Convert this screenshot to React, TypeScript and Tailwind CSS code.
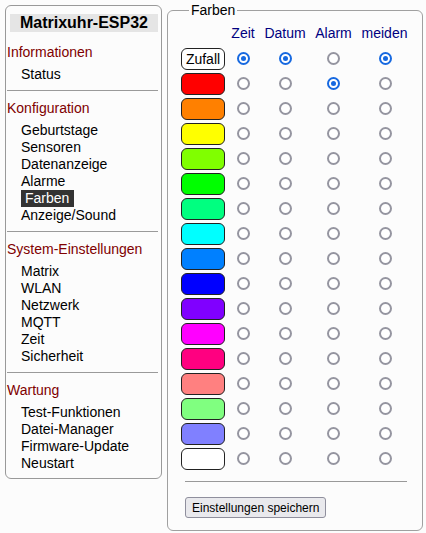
import React from "react";

const sections = [
  { title: "Informationen", items: ["Status"] },
  {
    title: "Konfiguration",
    items: ["Geburtstage", "Sensoren", "Datenanzeige", "Alarme", "Farben", "Anzeige/Sound"],
  },
  {
    title: "System-Einstellungen",
    items: ["Matrix", "WLAN", "Netzwerk", "MQTT", "Zeit", "Sicherheit"],
  },
  {
    title: "Wartung",
    items: ["Test-Funktionen", "Datei-Manager", "Firmware-Update", "Neustart"],
  },
];

const colors = [
  "#ff0000",
  "#ff8000",
  "#ffff00",
  "#80ff00",
  "#00ff00",
  "#00ff80",
  "#00ffff",
  "#0080ff",
  "#0000ff",
  "#8000ff",
  "#ff00ff",
  "#ff0080",
  "#ff8080",
  "#80ff80",
  "#8080ff",
  "#ffffff",
];

const columns = ["Zeit", "Datum", "Alarm", "meiden"];

// index of selected row per column (0 = Zufall)
const selected = [0, 0, 1, 0];

function Sidebar() {
  return (
    <nav className="mt-[5px] w-[157px] border border-[#999] rounded-[6px] pr-[3px] pb-[6px] bg-[#fcfcfc]">
      <div className="mt-[8px] ml-[4px] bg-[#e5e5e5] text-center font-bold text-[16px] leading-[18px] text-black">
        Matrixuhr-ESP32
      </div>
      {sections.map((s, i) => (
        <div key={s.title}>
          {i === 0 ? (
            <div className="h-[10px]" />
          ) : (
            <div className="mt-[7px] ml-[1px] h-px bg-[#9a9a9a]" />
          )}
          <div className={`pl-[1px] leading-[20px] text-[14px] text-[#800000] mb-[4px] ${i === 0 ? "" : "mt-[7px]"}`}>
            {s.title}
          </div>
          {s.items.map((it) => (
            <div key={it} className="pl-[15px] leading-[17px] text-[14px] text-black">
              {it === "Farben" ? (
                <span className="inline-block bg-[#333] text-white pl-[4px] pr-[5px]">{it}</span>
              ) : (
                it
              )}
            </div>
          ))}
        </div>
      ))}
    </nav>
  );
}

function Radio({ checked }: { checked: boolean }) {
  return checked ? (
    <span className="w-[13px] h-[13px] rounded-full border-2 border-[#1769e0] bg-white flex items-center justify-center">
      <span className="w-[5px] h-[5px] rounded-full bg-[#1769e0]" />
    </span>
  ) : (
    <span className="w-[13px] h-[13px] rounded-full border-2 border-[#9595a0] bg-white" />
  );
}

function ColorRow({ color, row }: { color?: string; row: number }) {
  return (
    <>
      <div className="h-[25px] flex items-center justify-center">
        {color ? (
          <div
            className="w-[44px] h-[22px] border border-[#222] rounded-[6px]"
            style={{ backgroundColor: color }}
          />
        ) : (
          <div className="w-[44px] h-[22px] border border-[#222] rounded-[6px] bg-white flex items-center justify-center text-[14px] leading-none text-black">
            Zufall
          </div>
        )}
      </div>
      {columns.map((n, c) => (
        <div key={n} className={`h-[25px] flex items-center justify-center ${c === 3 ? "pl-[2px]" : ""}`}>
          <Radio checked={selected[c] === row} />
        </div>
      ))}
    </>
  );
}

function ColorSettings() {
  return (
    <fieldset className="mt-[1px] w-[256px] border border-[#a0a0a0] rounded-[6px] pl-[11px] pb-[11px] bg-[#fcfcfc]">
      <legend className="ml-[10px] px-[2px] text-[14px] leading-[18px] text-black">Farben</legend>
      <div className="pt-[2px] grid grid-cols-[48px_32px_52px_45px_57px]">
        <div className="h-[25px]" />
        {columns.map((c) => (
          <div key={c} className="h-[25px] flex items-center justify-center text-[14px] text-[#000080]">
            {c}
          </div>
        ))}
        <ColorRow row={0} />
        {colors.map((col, i) => (
          <ColorRow key={col} color={col} row={i + 1} />
        ))}
      </div>
      <div className="ml-[6px] w-[222px]">
        <div className="mt-[10px] h-px bg-[#999]" />
        <button
          type="button"
          className="mt-[15px] h-[21px] px-[6px] border border-[#8f8f9d] rounded-[3px] bg-[#e9e9ed] text-[12px] leading-none text-black"
        >
          Einstellungen speichern
        </button>
      </div>
    </fieldset>
  );
}

export default function App() {
  return (
    <div
      className="min-h-[533px] w-[426px] bg-[#fcfcfc] flex items-start gap-[5px] pl-[5px]"
      style={{ fontFamily: '"Liberation Sans", Arial, sans-serif' }}
    >
      <Sidebar />
      <ColorSettings />
    </div>
  );
}
